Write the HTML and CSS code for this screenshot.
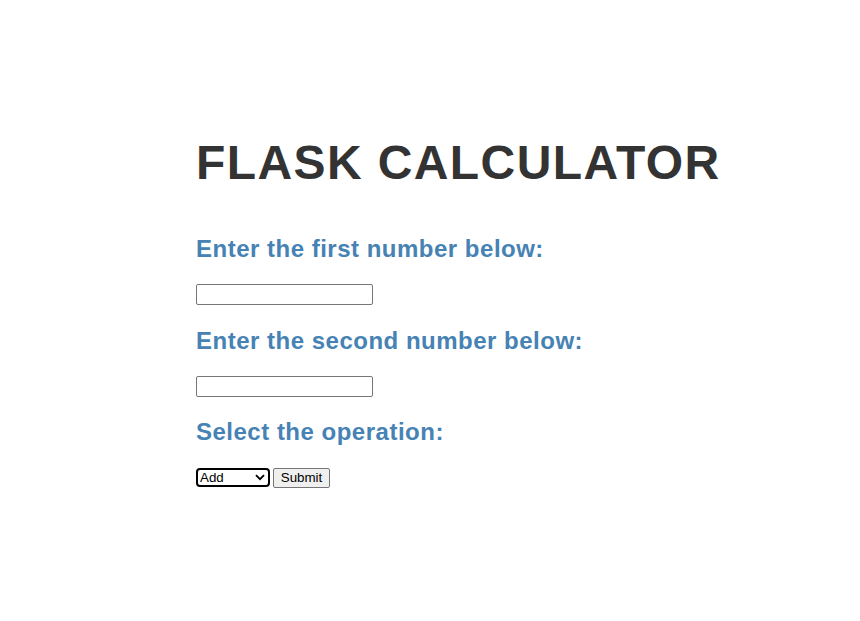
FILE: index.html
```html
<!DOCTYPE html>
<html lang="en">
<head>
<meta charset="utf-8">
<title>Flask Calculator</title>
<link rel="stylesheet" href="styles.css">
</head>
<body>
<main class="page">
  <h1 class="title">FLASK CALCULATOR</h1>
  <form class="calc" action="#" method="post">
    <h2 class="label">Enter the first number below:</h2>
    <div class="row"><input class="num" type="text" name="first"></div>
    <h2 class="label">Enter the second number below:</h2>
    <div class="row"><input class="num" type="text" name="second"></div>
    <h2 class="label">Select the operation:</h2>
    <div class="row actions">
      <span class="select-wrap">
        <select class="op" name="operation">
          <option>Add</option>
          <option>Subtract</option>
          <option>Multiply</option>
          <option>Divide</option>
        </select>
        <svg class="chev" width="10" height="7" viewBox="0 0 10 7" aria-hidden="true"><path d="M1 1.2 L5 5.2 L9 1.2" fill="none" stroke="#000" stroke-width="1.8"/></svg>
      </span>
      <button class="submit" type="submit">Submit</button>
    </div>
  </form>
</main>
</body>
</html>
```
FILE: styles.css
```css
html, body {
  margin: 0;
  padding: 0;
  background: #ffffff;
}

body {
  font-family: "Liberation Sans", Arial, sans-serif;
}

.page {
  padding: 135px 0 0 196px;
}

.title {
  margin: 0 0 44px;
  font-size: 48px;
  line-height: 56px;
  font-weight: bold;
  letter-spacing: 1.4px;
  color: #333333;
  white-space: nowrap;
}

.calc {
  margin: 0;
}

.label {
  margin: 20px 0;
  font-size: 24px;
  line-height: 28px;
  font-weight: bold;
  letter-spacing: 0.5px;
  color: #4682b4;
}

.row {
  padding: 1px 0 1.5px;
}

.num {
  display: block;
  box-sizing: border-box;
  width: 177px;
  height: 21px;
  margin: 0;
  padding: 1px 2px;
  border: 1px solid #767676;
  border-radius: 2px;
  font-family: "Liberation Sans", Arial, sans-serif;
  font-size: 13.33px;
  background: #ffffff;
}

.actions {
  display: flex;
  align-items: flex-start;
  gap: 3px;
  padding-top: 1.5px;
}

.select-wrap {
  position: relative;
  display: block;
}

.op {
  display: block;
  box-sizing: border-box;
  width: 74px;
  height: 19px;
  margin: 0;
  padding: 0 0 0 2px;
  border: 2px solid #000000;
  border-radius: 4px;
  background: #ffffff;
  color: #000000;
  font-family: "Liberation Sans", Arial, sans-serif;
  font-size: 13.33px;
  line-height: 15px;
  -webkit-appearance: none;
  appearance: none;
  outline: none;
}

.chev {
  position: absolute;
  right: 5px;
  top: 6px;
  pointer-events: none;
}

.submit {
  box-sizing: border-box;
  width: 57px;
  height: 20px;
  margin: 0;
  padding: 0 6px;
  border: 1px solid #767676;
  border-radius: 2px;
  background: #efefef;
  color: #000000;
  font-family: "Liberation Sans", Arial, sans-serif;
  font-size: 13.33px;
  line-height: 16px;
}
```
